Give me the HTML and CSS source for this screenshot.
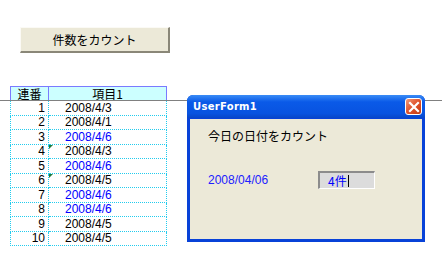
FILE: index.html
```html
<!DOCTYPE html>
<html lang="ja">
<head>
<meta charset="utf-8">
<link rel="stylesheet" href="styles.css">
</head>
<body>
<div class="sheet">
  <div class="btn">件数をカウント</div>
  <table class="grid">
    <tr class="hd"><th class="c1">連番</th><th class="c2">項目1</th></tr>
    <tr class="r"><td class="n">1</td><td>2008/4/3</td></tr>
    <tr class="r"><td class="n">2</td><td>2008/4/1</td></tr>
    <tr class="r"><td class="n">3</td><td class="blue">2008/4/6</td></tr>
    <tr class="r"><td class="n">4</td><td class="mark">2008/4/3</td></tr>
    <tr class="r"><td class="n">5</td><td class="blue">2008/4/6</td></tr>
    <tr class="r"><td class="n">6</td><td class="mark">2008/4/5</td></tr>
    <tr class="r"><td class="n">7</td><td class="blue">2008/4/6</td></tr>
    <tr class="r"><td class="n">8</td><td class="blue">2008/4/6</td></tr>
    <tr class="r"><td class="n">9</td><td>2008/4/5</td></tr>
    <tr class="r"><td class="n">10</td><td>2008/4/5</td></tr>
  </table>
  <div class="hline"></div>
  <div class="dialog">
    <div class="titlebar">
      <span class="title">UserForm1</span>
      <span class="close"><svg width="12" height="12" viewBox="0 0 12 12"><path d="M2 2 L10 10 M10 2 L2 10" stroke="#fff" stroke-width="2.2" stroke-linecap="square"/></svg></span>
    </div>
    <div class="client">
      <div class="lbl">今日の日付をカウント</div>
      <div class="row">
        <span class="date">2008/04/06</span>
        <span class="tb">4件<span class="caret"></span></span>
      </div>
    </div>
  </div>
</div>
</body>
</html>
```
FILE: styles.css
```css
html, body { margin: 0; padding: 0; background: #fff; }
body { width: 442px; height: 267px; overflow: hidden; font-family: "Noto Sans CJK JP", "Liberation Sans", sans-serif; }
.sheet { position: relative; width: 442px; height: 267px; padding-top: 27px; box-sizing: border-box; }

.btn {
  margin-left: 20px; width: 150px; height: 26px; box-sizing: border-box;
  background: #ece9d8; border-right: 2px solid #8a8778; border-bottom: 2px solid #8a8778;
  border-top: 1px solid #fbfaf5; border-left: 1px solid #fbfaf5;
  font-size: 12px; line-height: 23px; text-align: center; color: #000;
}

.grid {
  margin-top: 33px; margin-left: 10px; border-collapse: collapse; font-size: 12px; color: #000;
  border: 1px dotted #22ccee; font-family: "Liberation Sans", "Noto Sans CJK JP", sans-serif;
}
.grid th {
  background: #ccffff; border: 1px solid #7a7aff; font-weight: normal; height: 13px; padding: 0;
  line-height: 13px; font-size: 12px; font-family: "Noto Sans CJK JP", sans-serif;
}
.grid .c1 { width: 37px; }
.grid .c2 { width: 117px; }
.grid td { border: 1px dotted #22ccee; padding: 0; height: 13px; line-height: 13px; }
.grid tr.r:nth-child(even) td { height: 14px; }
.grid td.n { text-align: right; padding-right: 3px; }
.grid td:not(.n) { padding-left: 16px; position: relative; }
.grid td.blue { color: #0000ff; }
.grid td.mark::before {
  content: ""; position: absolute; left: 0; top: 0; width: 0; height: 0;
  border-top: 4px solid #1f7a3c; border-right: 4px solid transparent;
}

.hline { position: absolute; left: 0; top: 100px; width: 442px; height: 1px; background: #808080; }

.dialog {
  position: absolute; left: 187px; top: 95px; width: 238px; height: 147px; box-sizing: border-box;
  background: #0842d8; border-radius: 6px 6px 0 0; padding: 0 3px 3px 3px;
  display: flex; flex-direction: column;
}
.titlebar {
  height: 23px; display: flex; align-items: center; justify-content: space-between;
  background: linear-gradient(#3a8cf6, #0a5ae8 30%, #0853e0 80%, #0846c8);
  margin: 0 -3px; padding: 0 3px 0 6px; border-radius: 6px 6px 0 0;
}
.title { color: #fff; font-family: "DejaVu Sans", sans-serif; font-weight: bold; font-size: 10px; letter-spacing: 0.3px; }
.close {
  width: 17px; height: 17px; box-sizing: border-box; border: 1px solid #fff; border-radius: 3px;
  background: linear-gradient(135deg, #f0997a, #e0512a 50%, #c43a12);
  display: flex; align-items: center; justify-content: center;
}
.close svg { display: block; }
.client { flex: 1; background: #ece9d8; padding: 9px 0 0 18px; border-top: 1px solid #0842d8; }
.lbl { font-size: 12px; line-height: 16px; color: #000; }
.row { margin-top: 27px; display: flex; align-items: center; }
.date { color: #2020ff; font-family: "Liberation Sans", sans-serif; font-size: 12px; width: 110px; }
.tb {
  width: 57px; height: 18px; box-sizing: border-box; background: #dcdcdc;
  border-top: 2px solid #8c8c8c; border-left: 2px solid #8c8c8c; border-right: 1px solid #fff; border-bottom: 1px solid #fff;
  color: #0000ff; font-size: 12px; line-height: 14px; padding-left: 8px; display: flex; align-items: center;
}
.caret { display: inline-block; width: 1px; height: 12px; background: #000; margin-left: 1px; }
```
